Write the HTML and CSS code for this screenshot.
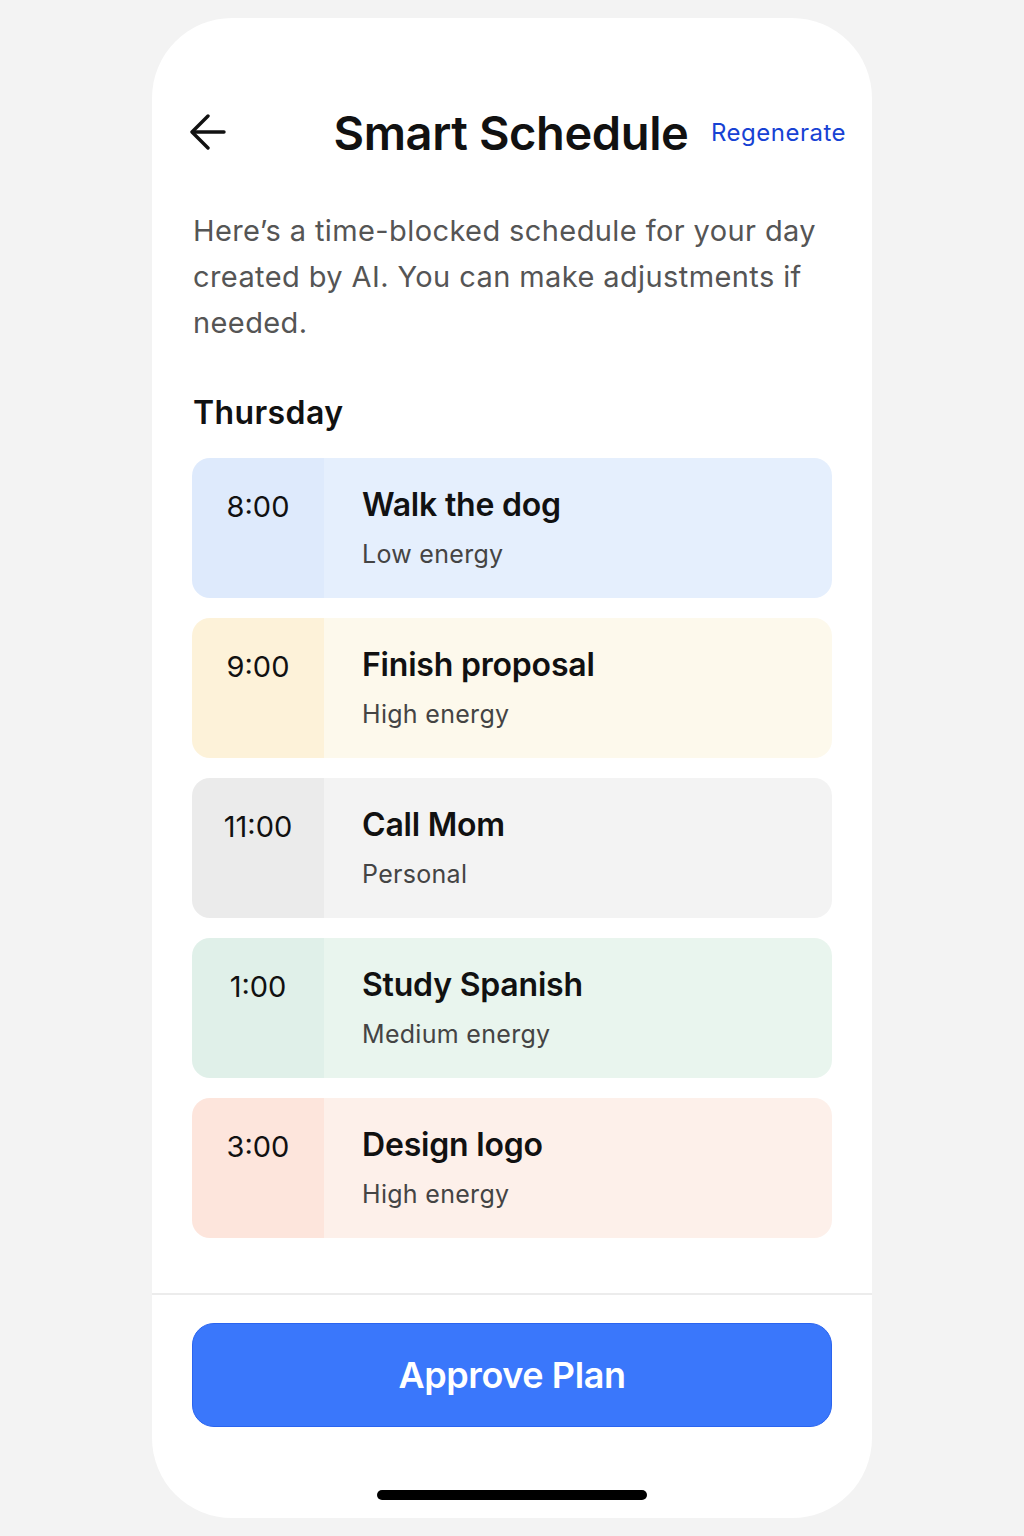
FILE: index.html
```html
<!DOCTYPE html>
<html lang="en">
<head>
<meta charset="utf-8">
<title>Smart Schedule</title>
<link rel="stylesheet" href="styles.css">
</head>
<body>
<div class="phone">
  <div class="content">
    <header class="header">
      <button class="back" aria-label="Back">
        <svg width="36" height="36" viewBox="0 0 36 36" fill="none" stroke="#111" stroke-width="3.4" stroke-linecap="round" stroke-linejoin="round">
          <path d="M18 2 L2 18 L18 34"/>
          <path d="M3 18 H34"/>
        </svg>
      </button>
      <h1 class="title">Smart Schedule</h1>
      <a class="regen" href="#">Regenerate</a>
    </header>

    <p class="desc">Here’s a time-blocked schedule for your day created by AI. You can make adjustments if needed.</p>

    <h2 class="day">Thursday</h2>

    <div class="list">
      <div class="item blue">
        <div class="time">8:00</div>
        <div class="body"><div class="name">Walk the dog</div><div class="meta">Low energy</div></div>
      </div>
      <div class="item yellow">
        <div class="time">9:00</div>
        <div class="body"><div class="name">Finish proposal</div><div class="meta">High energy</div></div>
      </div>
      <div class="item gray">
        <div class="time">11:00</div>
        <div class="body"><div class="name">Call Mom</div><div class="meta">Personal</div></div>
      </div>
      <div class="item green">
        <div class="time">1:00</div>
        <div class="body"><div class="name">Study Spanish</div><div class="meta">Medium energy</div></div>
      </div>
      <div class="item peach">
        <div class="time">3:00</div>
        <div class="body"><div class="name">Design logo</div><div class="meta">High energy</div></div>
      </div>
    </div>
  </div>

  <footer class="footer">
    <button class="approve">Approve Plan</button>
    <div class="home-indicator"></div>
  </footer>
</div>
</body>
</html>
```

FILE: styles.css
```css
* { box-sizing: border-box; }

html, body {
  margin: 0;
  padding: 0;
  background: #f3f3f3;
}

body {
  font-family: Inter, "Noto Sans", "Liberation Sans", sans-serif;
  color: #111;
}

.phone {
  width: 720px;
  height: 1500px;
  margin: 18px auto 0;
  background: #fff;
  border-radius: 80px;
  overflow: hidden;
  display: flex;
  flex-direction: column;
}

.content {
  flex: 1;
  padding: 84px 40px 0 40px;
}

.header {
  display: grid;
  grid-template-columns: 1fr auto 1fr;
  align-items: center;
  height: 60px;
  margin: 0 0 0 -2px;
}

.back {
  justify-self: start;
  background: none;
  border: 0;
  padding: 0;
  width: 36px;
  height: 36px;
  display: flex;
}

.title {
  margin: 0;
  font-size: 47px;
  font-weight: 600;
  letter-spacing: -0.4px;
  color: #111;
}

.regen {
  justify-self: end;
  margin-right: -14px;
  font-size: 24px;
  letter-spacing: 0.5px;
  color: #1742d4;
  text-decoration: none;
}

.desc {
  margin: 46px 0 0 1px;
  font-size: 29px;
  line-height: 46px;
  color: #555;
  letter-spacing: 0.4px;
}

.day {
  margin: 47px 0 0 1px;
  font-size: 32px;
  line-height: 40px;
  font-weight: 600;
  letter-spacing: 0.4px;
}

.list {
  margin-top: 25px;
  display: flex;
  flex-direction: column;
  gap: 20px;
}

.item {
  height: 140px;
  border-radius: 18px;
  display: flex;
  overflow: hidden;
}

.time {
  width: 132px;
  flex: none;
  text-align: center;
  padding-top: 29px;
  font-size: 29px;
  line-height: 40px;
  color: #111;
}

.body {
  flex: 1;
  padding: 27px 0 0 38px;
}

.name {
  font-size: 32px;
  line-height: 40px;
  font-weight: 600;
  letter-spacing: -0.2px;
  color: #111;
}

.meta {
  margin-top: 13px;
  font-size: 25px;
  line-height: 32px;
  letter-spacing: 0.3px;
  color: #444;
}

.blue .time { background: #deeafc; }
.blue .body { background: #e5effd; }
.yellow .time { background: #fdf2d9; }
.yellow .body { background: #fdf9ec; }
.gray .time { background: #ebebeb; }
.gray .body { background: #f3f3f3; }
.green .time { background: #e0f0e9; }
.green .body { background: #e9f5ee; }
.peach .time { background: #fde5dc; }
.peach .body { background: #fdf0ea; }

.footer {
  border-top: 2px solid #ececec;
  padding: 28px 40px 18px;
  display: flex;
  flex-direction: column;
  align-items: center;
}

.approve {
  width: 100%;
  height: 104px;
  border-radius: 22px;
  background: #3a77fb;
  border: 1.5px solid #2a64ef;
  color: #fff;
  font-family: inherit;
  font-size: 36px;
  font-weight: 600;
  letter-spacing: -0.4px;
}

.home-indicator {
  margin-top: 63px;
  width: 270px;
  height: 10px;
  border-radius: 5px;
  background: #000;
}
```
